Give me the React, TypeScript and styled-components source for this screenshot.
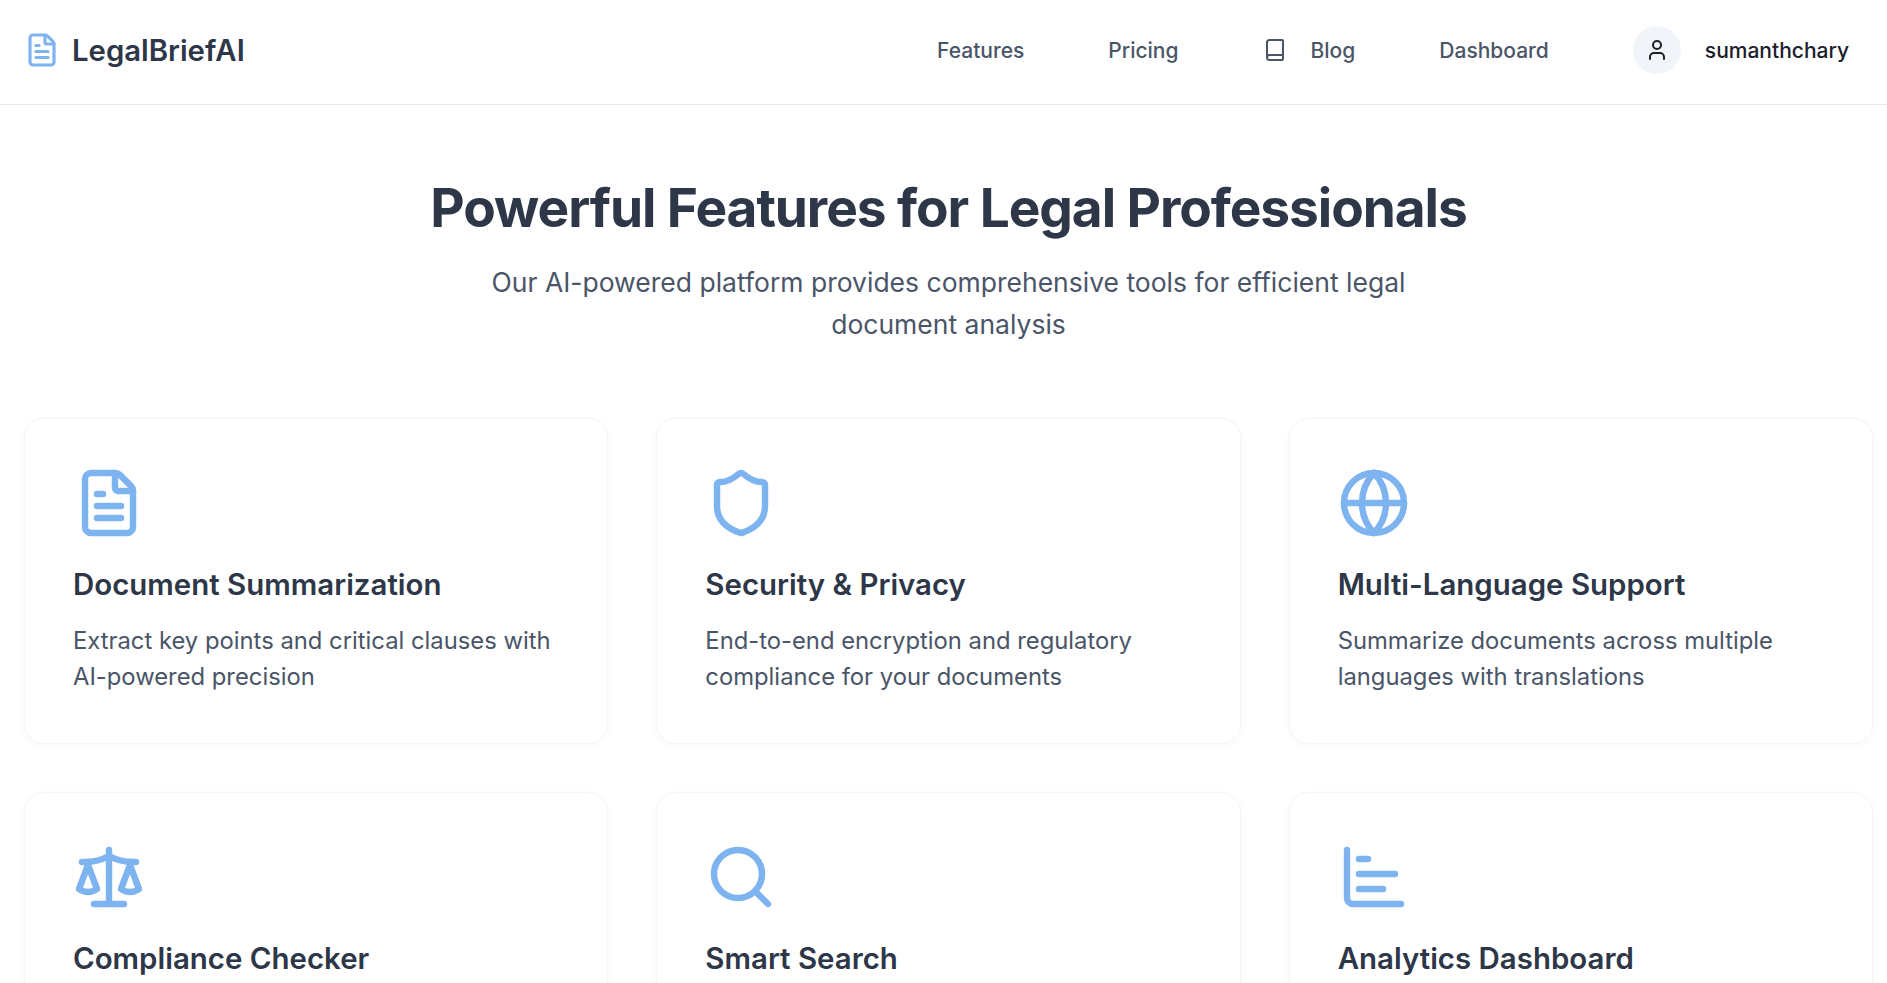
import React from "react";
import styled, { createGlobalStyle } from "styled-components";
import { FileText, Shield, Globe, Scale, Search, ChartBar, Book, User } from "lucide-react";

const Global = createGlobalStyle`
  html, body { margin: 0; padding: 0; background: #ffffff; overflow: hidden; height: 983px; }
  body { font-family: Inter, "Liberation Sans", sans-serif; }
  * { box-sizing: border-box; }
`;

const Page = styled.div`
  width: 1897px;
  height: 983px;
  overflow: hidden;
`;

const Header = styled.header`
  display: flex;
  align-items: center;
  justify-content: space-between;
  height: 105px;
  padding: 0 48px 4px 24px;
  border-bottom: 1px solid #e2e8f0;
`;

const Brand = styled.div`
  display: flex;
  align-items: center;
  gap: 12px;
  color: #2d3748;
  font-size: 29.3px;
  font-weight: 600;
  svg { color: #7db3ee; }
`;

const Nav = styled.nav`
  display: flex;
  align-items: center;
  gap: 84px;
`;

const NavLink = styled.a`
  display: flex;
  align-items: center;
  gap: 24px;
  color: #4a5568;
  font-size: 21px;
  font-weight: 500;
`;

const UserBox = styled.div`
  display: flex;
  align-items: center;
  gap: 24px;
  color: #1a202c;
  font-size: 21px;
  font-weight: 500;
`;

const Avatar = styled.span`
  display: flex;
  align-items: center;
  justify-content: center;
  width: 48px;
  height: 48px;
  border-radius: 50%;
  background: #f1f5f9;
`;

const Main = styled.main`
  padding: 70px 24px 0;
`;

const Hero = styled.section`
  display: flex;
  flex-direction: column;
  align-items: center;
  margin-bottom: 73px;
`;

const Title = styled.h1`
  margin: 0 0 21px;
  color: #2d3748;
  font-size: 53.2px;
  letter-spacing: -0.02em;
  line-height: 65px;
  font-weight: 700;
`;

const Subtitle = styled.p`
  margin: 0;
  max-width: 960px;
  text-align: center;
  color: #4a5568;
  font-size: 26.5px;
  line-height: 42px;
`;

const Grid = styled.div`
  display: grid;
  grid-template-columns: repeat(3, 1fr);
  gap: 48px;
`;

const Card = styled.article`
  padding: 48px;
  background: #ffffff;
  border: 1px solid #f5f5f5;
  border-radius: 20px;
  box-shadow: 0 2px 8px rgba(0, 0, 0, 0.03);
  svg { display: block; color: #7db3ee; margin-bottom: 28px; }
`;

const CardTitle = styled.h3`
  margin: 0 0 20.8px;
  color: #2d3748;
  font-size: 29.44px;
  line-height: 35px;
  font-weight: 600;
`;

const CardText = styled.p`
  margin: 0;
  color: #4a5568;
  font-size: 23.8px;
  line-height: 36px;
`;

const features = [
  { Icon: FileText, title: "Document Summarization", text: "Extract key points and critical clauses with AI-powered precision" },
  { Icon: Shield, title: "Security & Privacy", text: "End-to-end encryption and regulatory compliance for your documents" },
  { Icon: Globe, title: "Multi-Language Support", text: "Summarize documents across multiple languages with translations" },
  { Icon: Scale, title: "Compliance Checker", text: "Automated compliance checks against legal standards and regulations" },
  { Icon: Search, title: "Smart Search", text: "Find relevant information quickly across all your legal documents" },
  { Icon: ChartBar, title: "Analytics Dashboard", text: "Track document insights and usage trends with visual reports" },
];

export default function App() {
  return (
    <Page>
      <Global />
      <Header>
        <Brand>
          <FileText size={36} strokeWidth={2.1} />
          LegalBriefAI
        </Brand>
        <Nav>
          <NavLink>Features</NavLink>
          <NavLink>Pricing</NavLink>
          <NavLink><Book size={24} />Blog</NavLink>
          <NavLink>Dashboard</NavLink>
          <UserBox>
            <Avatar><User size={24} /></Avatar>
            sumanthchary
          </UserBox>
        </Nav>
      </Header>
      <Main>
        <Hero>
          <Title>Powerful Features for Legal Professionals</Title>
          <Subtitle>
            Our AI-powered platform provides comprehensive tools for efficient legal document analysis
          </Subtitle>
        </Hero>
        <Grid>
          {features.map(({ Icon, title, text }) => (
            <Card key={title}>
              <Icon size={72} strokeWidth={2.15} />
              <CardTitle>{title}</CardTitle>
              <CardText>{text}</CardText>
            </Card>
          ))}
        </Grid>
      </Main>
    </Page>
  );
}
